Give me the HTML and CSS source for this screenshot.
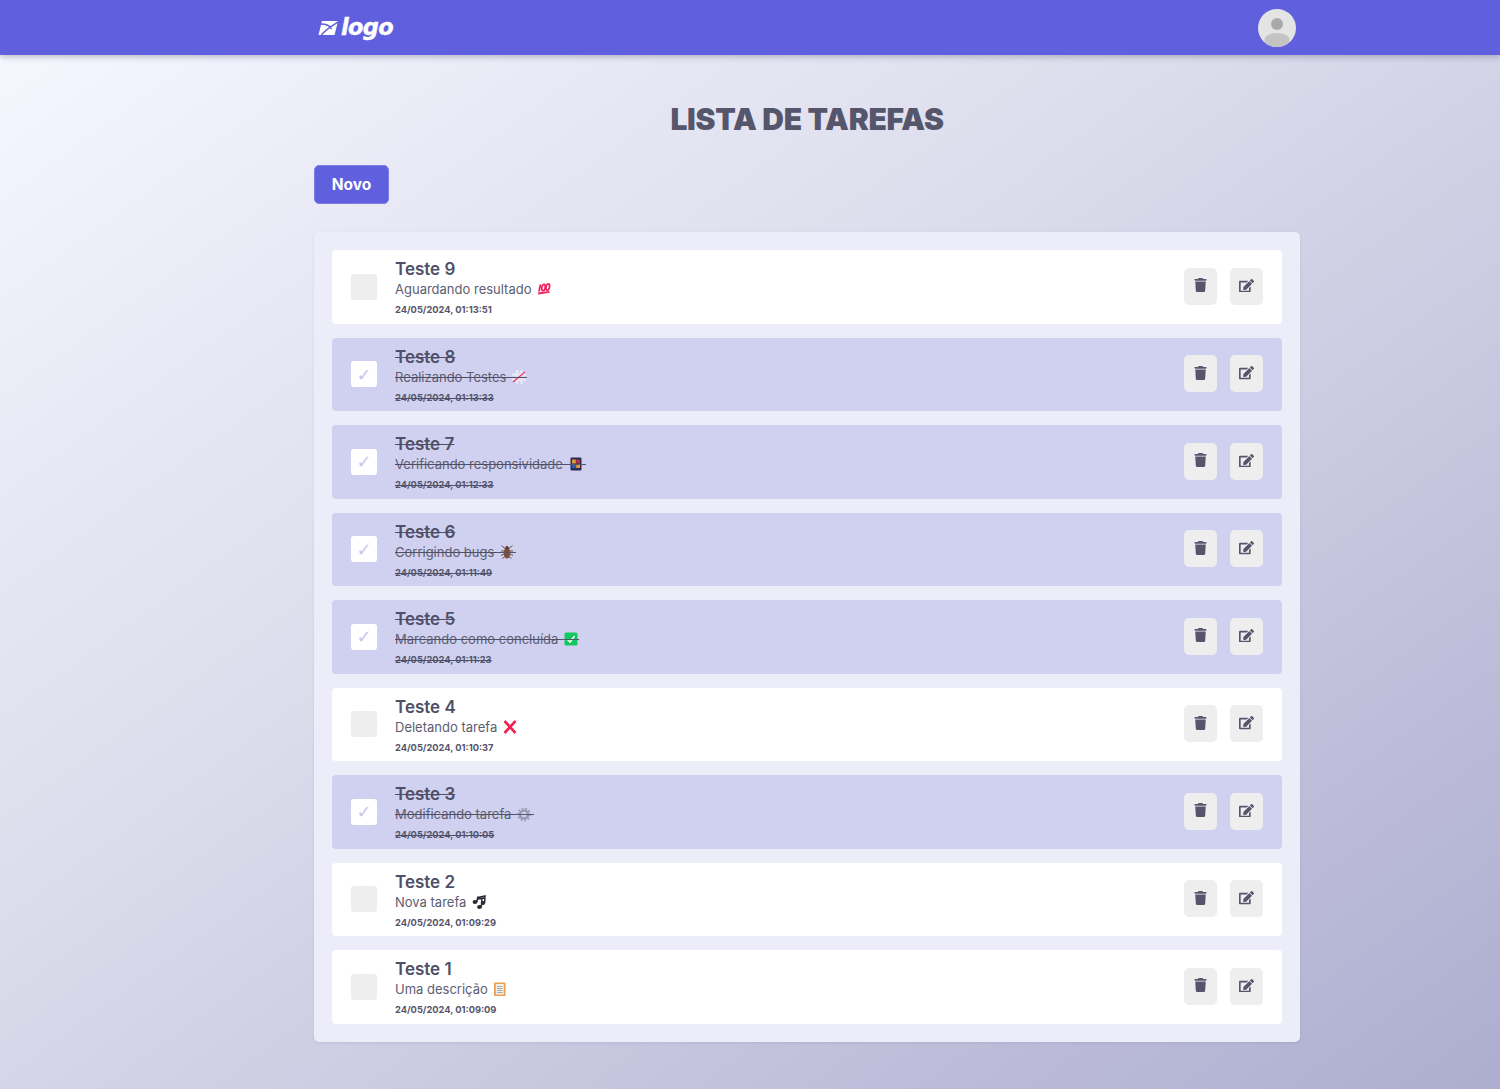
FILE: index.html
```html
<!DOCTYPE html>
<html lang="pt-BR">
<head>
<meta charset="utf-8">
<title>Lista de Tarefas</title>
<link rel="stylesheet" href="styles.css">
</head>
<body>
<svg class="defs" width="0" height="0" aria-hidden="true">
  <symbol id="trash" viewBox="0 0 448 512"><path fill="currentColor" d="M135.2 17.7L128 32H32C14.3 32 0 46.3 0 64S14.3 96 32 96H416c17.7 0 32-14.3 32-32s-14.3-32-32-32H320l-7.2-14.3C307.4 6.8 296.3 0 284.2 0H163.8c-12.1 0-23.2 6.8-28.6 17.7zM416 128H32L53.2 467c1.6 25.3 22.6 45 47.9 45H346.9c25.3 0 46.3-19.7 47.9-45L416 128z"/></symbol>
  <symbol id="edit" viewBox="0 0 576 512"><path fill="currentColor" d="M402.6 83.2l90.2 90.2c3.8 3.8 3.8 10 0 13.8L274.4 405.6l-92.8 10.3c-12.4 1.4-22.9-9.1-21.5-21.5l10.3-92.8L388.8 83.2c3.8-3.8 10-3.8 13.8 0zm162-22.9l-48.8-48.8c-15.2-15.2-39.9-15.2-55.2 0l-35.4 35.4c-3.8 3.8-3.8 10 0 13.8l90.2 90.2c3.8 3.8 10 3.8 13.8 0l35.4-35.4c15.2-15.3 15.2-40 0-55.2zM384 346.2V448H64V128h229.8c3.2 0 6.2-1.3 8.5-3.5l40-40c7.6-7.6 2.2-20.5-8.5-20.5H48C21.5 64 0 85.5 0 112v352c0 26.5 21.5 48 48 48h352c26.5 0 48-21.5 48-48V306.2c0-10.7-12.9-16-20.5-8.5l-40 40c-2.2 2.3-3.5 5.3-3.5 8.5z"/></symbol>
</svg>

<header class="topbar">
  <div class="topbar-inner">
    <a class="logo" href="#">
      <svg class="logo-mark" viewBox="0 0 20 16" aria-hidden="true"><path fill="#fff" d="M4 1H20L16.500 15H0.500z"/><path d="M3 4C8 4 12 6 13.500 9M3.500 15C7 10 12 7 20 2" fill="none" stroke="#6060df" stroke-width="1.500"/></svg>
      <span class="logo-text">logo</span>
    </a>
    <div class="avatar">
      <svg viewBox="0 0 38 38" aria-hidden="true"><circle cx="19" cy="19" r="19" fill="#e4e4e4"/><circle cx="19" cy="15" r="6" fill="#a9a9a9"/><ellipse cx="19" cy="31" rx="12.500" ry="7" fill="#c4c4c4"/></svg>
    </div>
  </div>
</header>

<main class="page">
  <h1 class="title">LISTA DE TAREFAS</h1>
  <button class="new-btn">Novo</button>

  <section class="board">
    <article class="task">
      <span class="check"></span>
      <div class="task-text">
        <h2>Teste 9</h2>
        <p>Aguardando resultado <svg class="emoji" viewBox="0 0 14 14"><g fill="none" stroke="#f4235f" stroke-width="1.800"><path d="M3.500 2.500 2 9.500"/><ellipse cx="6.500" cy="5.500" rx="1.700" ry="3.200" transform="rotate(12 6.500 5.500)"/><ellipse cx="10.800" cy="5" rx="1.700" ry="3.200" transform="rotate(12 10.800 5)"/><path d="M1 11.500 12.500 9.800"/></g></svg></p>
        <time>24/05/2024, 01:13:51</time>
      </div>
      <div class="actions">
        <button class="icon-btn"><svg class="i-trash"><use href="#trash"/></svg></button>
        <button class="icon-btn"><svg class="i-edit"><use href="#edit"/></svg></button>
      </div>
    </article>

    <article class="task done">
      <span class="check">✓</span>
      <div class="task-text">
        <h2>Teste 8</h2>
        <p>Realizando Testes <svg class="emoji" viewBox="0 0 14 14"><g stroke="#e6e6f6" stroke-width="2.400"><path d="M5 0V14M9.500 0V14M0 4.500H14M0 9.500H14"/></g><path d="M1 12 13 2" stroke="#f4356b" stroke-width="1.300"/><path class="strike" d="M-4 7.500H15"/></svg></p>
        <time>24/05/2024, 01:13:33</time>
      </div>
      <div class="actions">
        <button class="icon-btn"><svg class="i-trash"><use href="#trash"/></svg></button>
        <button class="icon-btn"><svg class="i-edit"><use href="#edit"/></svg></button>
      </div>
    </article>

    <article class="task done">
      <span class="check">✓</span>
      <div class="task-text">
        <h2>Teste 7</h2>
        <p>Verificando responsividade <svg class="emoji" viewBox="0 0 14 14"><rect x="1.500" y="0.500" width="11" height="13" rx="1.200" fill="#2b2b55"/><rect x="3" y="2.500" width="3.800" height="4" fill="#e0a030"/><rect x="7.200" y="2.500" width="3.800" height="4" fill="#c03040"/><rect x="3" y="7" width="3.800" height="4" fill="#3060b0"/><rect x="7.200" y="7" width="3.800" height="4" fill="#e0a030"/><path class="strike" d="M-4 7.500H17"/></svg></p>
        <time>24/05/2024, 01:12:33</time>
      </div>
      <div class="actions">
        <button class="icon-btn"><svg class="i-trash"><use href="#trash"/></svg></button>
        <button class="icon-btn"><svg class="i-edit"><use href="#edit"/></svg></button>
      </div>
    </article>

    <article class="task done">
      <span class="check">✓</span>
      <div class="task-text">
        <h2>Teste 6</h2>
        <p>Corrigindo bugs <svg class="emoji" viewBox="0 0 14 14"><g stroke="#6f4a3c" stroke-width="1" fill="none"><path d="M1.500 0.500 5.500 4M12.500 0.500 8.500 4M1 6H5M13 6H9M1 10.500 5 8.500M13 10.500 9 8.500M2.500 13.500 5.500 11M11.500 13.500 8.500 11"/></g><ellipse cx="7" cy="8" rx="3.200" ry="5.500" fill="#7a4f3e"/><circle cx="7" cy="2.800" r="1.800" fill="#5b3a2e"/><path class="strike" d="M-4 7.500H16"/></svg></p>
        <time>24/05/2024, 01:11:49</time>
      </div>
      <div class="actions">
        <button class="icon-btn"><svg class="i-trash"><use href="#trash"/></svg></button>
        <button class="icon-btn"><svg class="i-edit"><use href="#edit"/></svg></button>
      </div>
    </article>

    <article class="task done">
      <span class="check">✓</span>
      <div class="task-text">
        <h2>Teste 5</h2>
        <p>Marcando como concluída <svg class="emoji" viewBox="0 0 14 14"><rect x="0.500" y="0.500" width="13" height="13" rx="1.500" fill="#12c95f"/><path d="M3.500 7.500 6 10 10.500 4" fill="none" stroke="#fff" stroke-width="1.600"/><path class="strike" d="M-4 7.500H15"/></svg></p>
        <time>24/05/2024, 01:11:23</time>
      </div>
      <div class="actions">
        <button class="icon-btn"><svg class="i-trash"><use href="#trash"/></svg></button>
        <button class="icon-btn"><svg class="i-edit"><use href="#edit"/></svg></button>
      </div>
    </article>

    <article class="task">
      <span class="check"></span>
      <div class="task-text">
        <h2>Teste 4</h2>
        <p>Deletando tarefa <svg class="emoji" viewBox="0 0 14 14"><path d="M1.500 1 12.500 13M12.500 1 1.500 13" fill="none" stroke="#f3214f" stroke-width="2.600"/></svg></p>
        <time>24/05/2024, 01:10:37</time>
      </div>
      <div class="actions">
        <button class="icon-btn"><svg class="i-trash"><use href="#trash"/></svg></button>
        <button class="icon-btn"><svg class="i-edit"><use href="#edit"/></svg></button>
      </div>
    </article>

    <article class="task done">
      <span class="check">✓</span>
      <div class="task-text">
        <h2>Teste 3</h2>
        <p>Modificando tarefa <svg class="emoji" viewBox="0 0 14 14"><circle cx="7" cy="7.500" r="4" fill="none" stroke="#9a9ab2" stroke-width="2.600"/><circle cx="7" cy="7.500" r="6" fill="none" stroke="#9a9ab2" stroke-width="1.800" stroke-dasharray="1.800 1.800"/><path class="strike" d="M-4 7.500H17"/></svg></p>
        <time>24/05/2024, 01:10:05</time>
      </div>
      <div class="actions">
        <button class="icon-btn"><svg class="i-trash"><use href="#trash"/></svg></button>
        <button class="icon-btn"><svg class="i-edit"><use href="#edit"/></svg></button>
      </div>
    </article>

    <article class="task">
      <span class="check"></span>
      <div class="task-text">
        <h2>Teste 2</h2>
        <p>Nova tarefa <svg class="emoji" viewBox="0 0 14 14"><g fill="#2c2830"><ellipse cx="3" cy="7" rx="2.400" ry="2"/><ellipse cx="7.500" cy="12" rx="2.400" ry="2"/><ellipse cx="11" cy="8" rx="2.200" ry="1.900"/></g><path d="M4.800 7 6 1.500M9.300 12 10 4M12.600 8 13 1 6 2.500M5.500 4 13 3" fill="none" stroke="#2c2830" stroke-width="1.500"/></svg></p>
        <time>24/05/2024, 01:09:29</time>
      </div>
      <div class="actions">
        <button class="icon-btn"><svg class="i-trash"><use href="#trash"/></svg></button>
        <button class="icon-btn"><svg class="i-edit"><use href="#edit"/></svg></button>
      </div>
    </article>

    <article class="task">
      <span class="check"></span>
      <div class="task-text">
        <h2>Teste 1</h2>
        <p>Uma descrição <svg class="emoji" viewBox="0 0 14 14"><rect x="1" y="0.500" width="11.500" height="13.500" rx="1" fill="#eda04f"/><rect x="2.800" y="2" width="8" height="10.500" fill="#f1f0e8"/><path d="M4 4.500H9.500M4 6.500H9.500M4 8.500H9.500M4 10.500H9.500" stroke="#a0a0a0" stroke-width="0.900"/></svg></p>
        <time>24/05/2024, 01:09:09</time>
      </div>
      <div class="actions">
        <button class="icon-btn"><svg class="i-trash"><use href="#trash"/></svg></button>
        <button class="icon-btn"><svg class="i-edit"><use href="#edit"/></svg></button>
      </div>
    </article>
  </section>
</main>
</body>
</html>
```
FILE: styles.css
```css
* { box-sizing: border-box; }
html, body { margin: 0; height: 100%; }
body {
  min-height: 1089px;
  font-family: Inter, "Liberation Sans", sans-serif;
  color: #4f4f68;
  background: linear-gradient(to bottom right, #f7f8ff 0%, #dcdcec 42%, #adadd0 100%);
  overflow: hidden;
}
.defs { position: absolute; }

.topbar {
  height: 55px;
  background: #6060df;
  box-shadow: 0 2px 6px rgba(40, 40, 80, .28);
}
.topbar-inner {
  width: 986px;
  height: 100%;
  margin-left: 314px;
  padding: 0 4px;
  display: flex;
  align-items: center;
  justify-content: space-between;
}
.logo {
  display: flex;
  align-items: center;
  gap: 3px;
  color: #fff;
  text-decoration: none;
}
.logo-mark { width: 20px; height: 16px; }
.logo-text {
  font-family: "DejaVu Sans", sans-serif;
  font-weight: 700;
  font-style: oblique;
  font-size: 22.500px;
  line-height: 1;
  letter-spacing: -0.700px;
  -webkit-text-stroke: 0.400px #fff;
}
.avatar { width: 38px; height: 38px; }
.avatar svg { display: block; width: 38px; height: 38px; }

.page {
  width: 986px;
  margin-left: 314px;
  padding-top: 46px;
}
.title {
  margin: 0;
  text-align: center;
  font-size: 30px;
  font-weight: 900;
  line-height: 36px;
  letter-spacing: -0.250px;
  color: #55556c;
}
.new-btn {
  display: block;
  margin-top: 28px;
  width: 75px;
  height: 39px;
  padding: 0;
  border: 1px solid #7d7de6;
  border-radius: 5px;
  background: #6060df;
  color: #fff;
  font-family: Inter, sans-serif;
  font-weight: 700;
  font-size: 15.500px;
}

.board {
  margin-top: 28px;
  padding: 18px;
  background: #ecedf8;
  border-radius: 5px;
  display: flex;
  flex-direction: column;
  gap: 14px;
  box-shadow: 0 1px 3px rgba(80, 80, 120, .12);
}
.task {
  height: 73.500px;
  padding: 0 19px 0 19px;
  display: flex;
  align-items: center;
  gap: 18px;
  background: #fff;
  border-radius: 4px;
}
.task.done { background: #d0d1f0; }

.check {
  flex: none;
  width: 26px;
  height: 26px;
  border-radius: 3px;
  background: #eeeeee;
  display: flex;
  align-items: center;
  justify-content: center;
  color: #c6c6ec;
  font-family: "DejaVu Sans", sans-serif;
  font-size: 18px;
}
.done .check { background: #fff; }

.task-text { flex: 1; min-width: 0; padding-top: 6px; }
.done .task-text { text-decoration: line-through; }
.task-text h2 {
  margin: 0;
  font-size: 17px;
  font-weight: 600;
  line-height: 20px;
  color: #4f4f68;
}
.task-text p {
  margin: 0;
  font-size: 13px;
  font-weight: 400;
  line-height: 20px;
  color: #5d5d72;
}
.task-text time {
  display: block;
  margin-top: 1px;
  font-size: 9.300px;
  font-weight: 700;
  line-height: 20px;
  color: #55556c;
}
.emoji {
  width: 14px;
  height: 14px;
  margin-left: 2px;
  vertical-align: -2px;
  overflow: visible;
}
.strike { stroke: #55556c; stroke-width: 1; fill: none; }

.actions { flex: none; display: flex; gap: 13px; margin-top: -1px; }
.icon-btn {
  width: 33px;
  height: 37px;
  padding: 0;
  border: 0;
  border-radius: 5px;
  background: #eeeeee;
  color: #55556c;
  display: flex;
  align-items: center;
  justify-content: center;
}
.i-trash { width: 13px; height: 14px; margin-top: -2px; }
.i-edit { width: 15px; height: 13.500px; margin-top: -2px; margin-right: 1px; }
```
